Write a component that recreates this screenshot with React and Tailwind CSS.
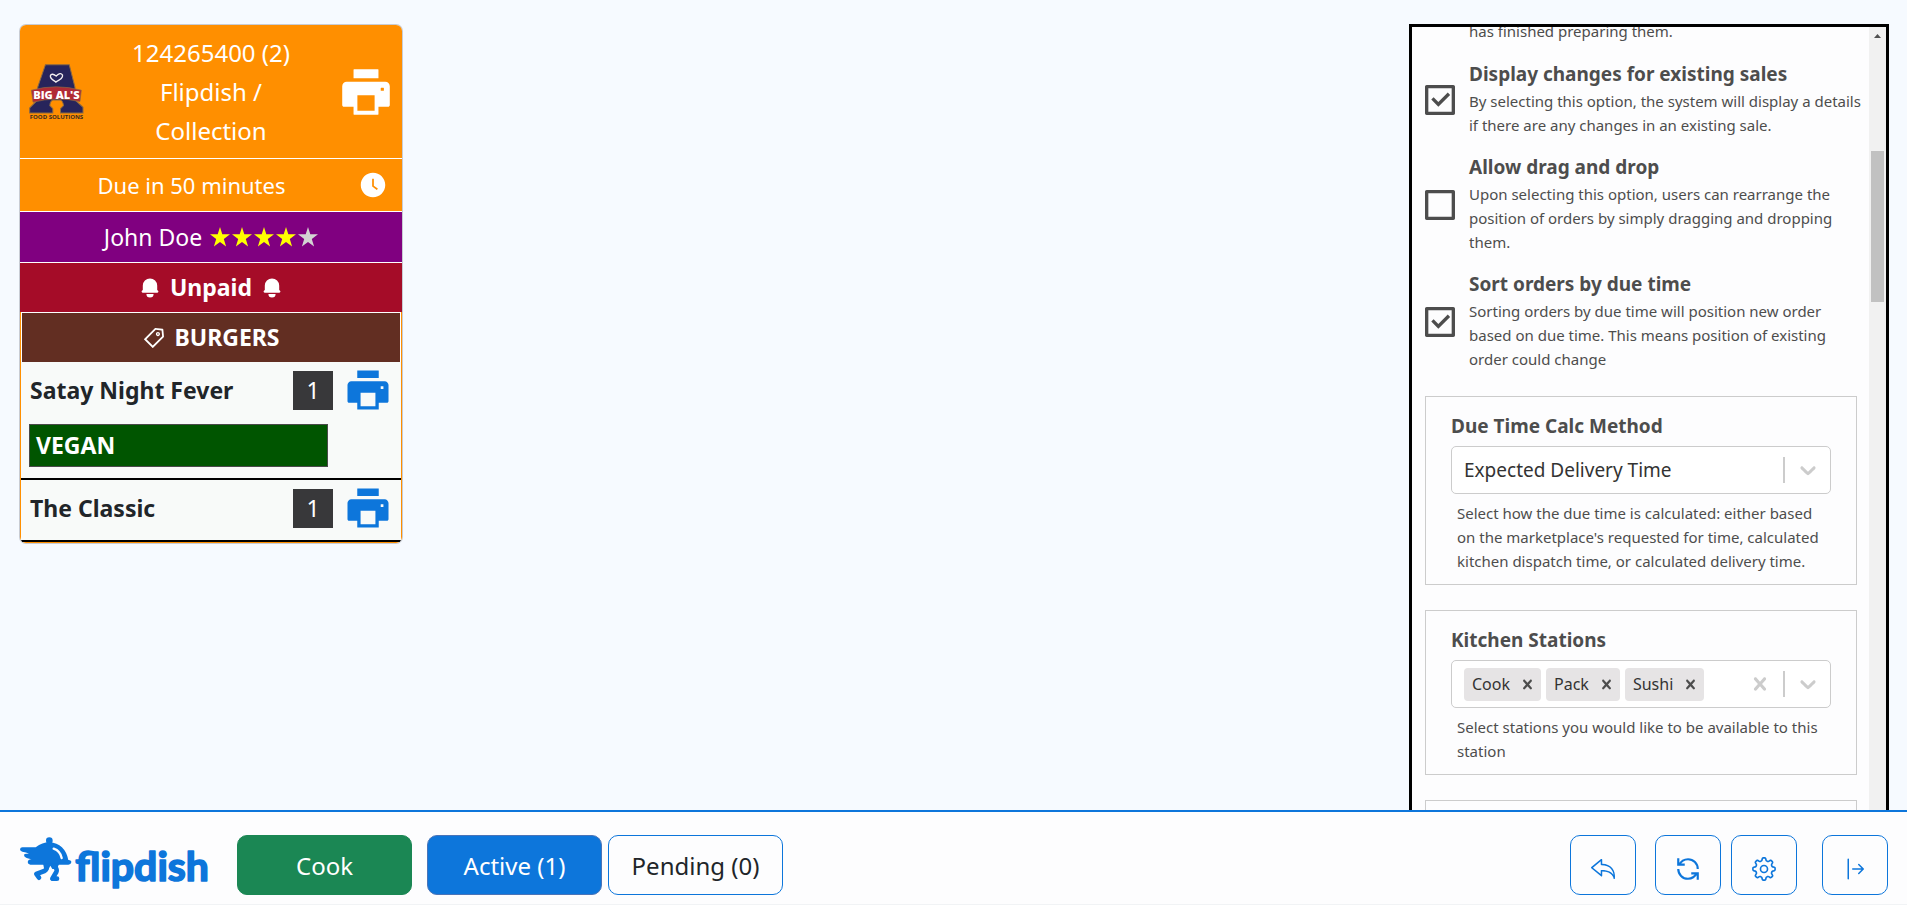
import React, { useState } from "react";
import { AiFillPrinter, AiFillClockCircle, AiOutlineTag } from "react-icons/ai";
import { BsArrowBarRight } from "react-icons/bs";
import { GoGear } from "react-icons/go";
import { GrPowerCycle } from "react-icons/gr";
import { HiBell } from "react-icons/hi";
import { RiCheckboxBlankLine, RiCheckboxLine } from "react-icons/ri";
import { SlActionUndo } from "react-icons/sl";

function FlipdishLogo() {
  return (
    <svg viewBox="15 30 570 180" className="h-[60px] w-[190px] shrink-0 overflow-visible text-[#0d76db]" role="img" aria-label="flipdish">
      <g fill="currentColor">
        <circle cx="103" cy="47" r="10" />
        <path d="M96 50 h14 v12 h-14z" />
        <path d="M22 67 H62 Q82 52 103 52 Q150 56 160 105 Q170 106 169 112 Q168 119 160 119 H46 Q38 117 38 111 Q39 104 47 103 H50 Q43 101 35 99 Q27 96 27 90 Q28 86 34 86 H42 Q34 82 22 80 Q15 78 15 73 Q16 67 22 67z" />
        <path d="M84 115 H133 L126 132 H112 L106 122 L100 134 H88z" />
      </g>
      <path d="M116 71 Q136 78 140 99" fill="none" stroke="#fdfdfe" strokeWidth="7" strokeLinecap="round" />
      <g fill="none" stroke="currentColor" strokeWidth="14" strokeLinecap="round" strokeLinejoin="round">
        <path d="M94 122 Q97 134 88 138 L64 147 L72 158" />
        <path d="M118 122 Q128 134 124 141 L112 161 H126" />
      </g>
      <text x="181" y="167" className="font-['Lato',sans-serif] text-[123px] font-bold" fill="currentColor" stroke="currentColor" strokeWidth="5" strokeLinejoin="round">
        flipdish
      </text>
    </svg>
  );
}

function BigAlsLogo() {
  return (
    <svg viewBox="24 36 170 170" className="size-[57px] shrink-0 overflow-visible" role="img" aria-label="Big Al's Food Solutions">
      <path d="M76 41 H147 L164 108 V146 L188 168 V185 H121 V172 L130 163 Q128 148 120 146 H98 Q90 150 89 163 L98 172 V185 H29 V170 L53 146 V108z" fill="#27245b" stroke="#8a6a45" strokeWidth="3" />
      <path d="M108 93 Q88 82 91 73 Q95 65 108 75 Q121 62 127 72 Q129 82 106 93" fill="none" stroke="#f3eef0" strokeWidth="4" strokeLinecap="round" />
      <path d="M34 117 Q108 97 183 117 L179 151 Q108 135 39 153z" fill="#b02a35" stroke="#8a6a45" strokeWidth="2" />
      <text x="109" y="142" textAnchor="middle" fill="#ffffff" className="font-['Open_Sans',sans-serif] text-[33px] font-extrabold">BIG AL'S</text>
      <text x="109" y="203" textAnchor="middle" fill="#3a2a20" className="font-['Open_Sans',sans-serif] text-[18px] font-bold">FOOD SOLUTIONS</text>
    </svg>
  );
}

function Star({ filled }) {
  return (
    <svg viewBox="0 0 20 20" className={filled ? "size-5 text-[#ffff00]" : "size-5 text-[#d3d3d3]"} aria-hidden="true">
      <path fill="currentColor" d="M10 0 L12.3 7.3 H20 L13.8 11.9 L16.1 19.5 L10 14.9 L3.9 19.5 L6.2 11.9 L0 7.3 H7.7z" />
    </svg>
  );
}

function Chevron() {
  return (
    <svg viewBox="0 0 20 20" className="size-[26px] text-[#cccccc]" aria-hidden="true">
      <path fill="currentColor" d="M4.516 7.548c0.436-0.446 1.043-0.481 1.576 0l3.908 3.747 3.908-3.747c0.533-0.481 1.141-0.446 1.574 0 0.436 0.445 0.408 1.197 0 1.615-0.406 0.418-4.695 4.502-4.695 4.502-0.217 0.223-0.502 0.335-0.787 0.335s-0.57-0.112-0.789-0.335c0 0-4.287-4.084-4.695-4.502s-0.436-1.17 0-1.615z" />
    </svg>
  );
}

function Cross({ className }) {
  return (
    <svg viewBox="0 0 20 20" className={className} aria-hidden="true">
      <path fill="currentColor" d="M14.348 14.849c-0.469 0.469-1.229 0.469-1.697 0l-2.651-3.030-2.651 3.029c-0.469 0.469-1.229 0.469-1.697 0-0.469-0.469-0.469-1.229 0-1.697l2.758-3.15-2.759-3.152c-0.469-0.469-0.469-1.228 0-1.697s1.228-0.469 1.697 0l2.652 3.031 2.651-3.031c0.469-0.469 1.228-0.469 1.697 0s0.469 1.229 0 1.697l-2.758 3.152 2.758 3.15c0.469 0.469 0.469 1.229 0 1.698z" />
    </svg>
  );
}

function OrderItem({ name, quantity, note }) {
  return (
    <li className="border-b-2 border-black bg-[#f8faf9]">
      <div className="flex h-[60px] items-center gap-2.5 pr-2 pb-1 pl-[9px]">
        <span className="flex-1 text-[23px] leading-8 font-bold text-[#212529]">{name}</span>
        <span className="flex h-[39px] w-10 items-center justify-center bg-[#38383a] text-[23px] text-white">{quantity}</span>
        <button type="button" aria-label={`Print ${name}`} className="text-[#0d76db]">
          <AiFillPrinter className="size-[50px]" />
        </button>
      </div>
      {note && (
        <p className="mt-0.5 mr-[73px] mb-[11px] ml-2 flex h-[43px] items-center border border-[#4a4a4a] bg-[#005500] px-1.5 text-[23px] font-bold text-white">
          {note}
        </p>
      )}
    </li>
  );
}

function OrderCard() {
  return (
    <article className="mt-px w-[382px] shrink-0 self-start overflow-hidden rounded-md text-[23px] text-white shadow-[0_0_0_1px_#c8ccd4]">
      <header className="flex h-[134px] items-center justify-between border-b border-white bg-[#ff8f00] pr-[7px] pl-2">
        <BigAlsLogo />
        <h2 className="w-[170px] text-center text-2xl leading-[39px]">124265400 (2) Flipdish / Collection</h2>
        <button type="button" aria-label="Print order">
          <AiFillPrinter className="size-[58px]" />
        </button>
      </header>
      <div className="flex h-[53px] items-center border-b border-white bg-[#ff8f00] pr-[15px]">
        <span className="flex-1 pl-1 text-center text-[22px]">Due in 50 minutes</span>
        <AiFillClockCircle className="size-7" />
      </div>
      <div className="flex h-[51px] items-center justify-center gap-2 border-b border-white bg-[#800080]">
        <span>John Doe</span>
        <span className="flex gap-0.5" role="img" aria-label="4 out of 5 stars">
          <Star filled />
          <Star filled />
          <Star filled />
          <Star filled />
          <Star />
        </span>
      </div>
      <div className="flex h-[49px] items-center justify-center gap-2 bg-[#a50c28] font-bold">
        <HiBell className="size-6" />
        <span>Unpaid</span>
        <HiBell className="size-6" />
      </div>
      <section className="border border-t-0 border-[#ff8f00] bg-white">
        <h3 className="mx-px flex h-[50px] items-center justify-center gap-2 border-t border-white bg-[#622e22] font-bold">
          <AiOutlineTag className="size-6" />
          BURGERS
        </h3>
        <ul>
          <OrderItem name="Satay Night Fever" quantity={1} note="VEGAN" />
          <OrderItem name="The Classic" quantity={1} />
        </ul>
      </section>
    </article>
  );
}

function ToggleOption({ title, description, defaultChecked = false }) {
  const [checked, setChecked] = useState(defaultChecked);
  const Box = checked ? RiCheckboxLine : RiCheckboxBlankLine;
  return (
    <label className="flex items-center gap-[9px] pr-1 pl-2">
      <span className="grid shrink-0 pt-1">
        <input
          type="checkbox"
          checked={checked}
          onChange={(e) => setChecked(e.target.checked)}
          className="col-start-1 row-start-1 size-10 appearance-none"
        />
        <Box className="pointer-events-none col-start-1 row-start-1 size-10" aria-hidden="true" />
      </span>
      <span className="flex flex-col">
        <span className="text-[19px] leading-[30px] font-bold">{title}</span>
        <span className="text-[15px] leading-6">{description}</span>
      </span>
    </label>
  );
}

function SettingBox({ title, htmlFor, description, children }) {
  return (
    <section className="mr-3 ml-[13px] flex flex-col border border-[#cccccc] px-[25px] pt-3.5 pb-[11px]">
      <label htmlFor={htmlFor} className="text-[19px] leading-[30px] font-bold">{title}</label>
      <div className="mt-[5px] mb-[7px]">{children}</div>
      <p className="px-1.5 text-[15px] leading-6">{description}</p>
    </section>
  );
}

function StationChip({ name, onRemove }) {
  return (
    <span className="flex h-[33px] items-center rounded-sm bg-[#e6e4e5] pl-2 text-base text-[#333333]">
      {name}
      <button type="button" aria-label={`Remove ${name}`} onClick={onRemove} className="flex h-full items-center pr-1 pl-2 text-[#4d4d4d]">
        <Cross className="size-[19px]" />
      </button>
    </span>
  );
}

function SettingsPanel() {
  const [stations, setStations] = useState(["Cook", "Pack", "Sushi"]);
  return (
    <aside className="flex w-[480px] shrink-0 overflow-hidden border-[3px] border-b-0 border-black bg-[#fdfdfe] text-[#4d4d4d]">
      <div className="flex min-w-0 flex-1 flex-col overflow-hidden">
        <p className="-mt-2 mb-4 shrink-0 pl-[57px] text-[15px] leading-6">has finished preparing them.</p>
        <div className="flex shrink-0 flex-col gap-[15px]">
          <ToggleOption
            defaultChecked
            title="Display changes for existing sales"
            description="By selecting this option, the system will display a details if there are any changes in an existing sale."
          />
          <ToggleOption
            title="Allow drag and drop"
            description="Upon selecting this option, users can rearrange the position of orders by simply dragging and dropping them."
          />
          <ToggleOption
            defaultChecked
            title="Sort orders by due time"
            description="Sorting orders by due time will position new order based on due time. This means position of existing order could change"
          />
        </div>
        <div className="mt-[25px] flex shrink-0 flex-col gap-[25px]">
          <SettingBox
            title="Due Time Calc Method"
            htmlFor="due-method"
            description="Select how the due time is calculated: either based on the marketplace's requested for time, calculated kitchen dispatch time, or calculated delivery time."
          >
            <div className="grid h-12 grid-cols-[1fr_auto] items-center rounded-[5px] border border-[#cccccc] bg-white">
              <select id="due-method" className="col-span-2 col-start-1 row-start-1 h-full w-full appearance-none bg-transparent pl-3 text-[19px] text-[#333333]">
                <option>Expected Delivery Time</option>
              </select>
              <span className="pointer-events-none col-start-2 row-start-1 flex items-center gap-2.5 pr-[9px]">
                <span className="h-[26px] w-0.5 bg-[#cccccc]" />
                <Chevron />
              </span>
            </div>
          </SettingBox>
          <SettingBox title="Kitchen Stations" htmlFor="stations" description="Select stations you would like to be available to this station">
            <div className="flex h-12 items-center gap-[5px] rounded-[5px] border border-[#cccccc] bg-white pr-[9px] pl-3">
              {stations.map((s) => (
                <StationChip key={s} name={s} onRemove={() => setStations(stations.filter((x) => x !== s))} />
              ))}
              <input id="stations" type="text" className="h-full min-w-0 flex-1 bg-transparent outline-none" />
              <span className="flex items-center gap-2.5">
                <button type="button" aria-label="Clear stations" onClick={() => setStations([])}>
                  <Cross className="size-[26px] text-[#cccccc]" />
                </button>
                <span className="h-[26px] w-0.5 bg-[#cccccc]" />
                <Chevron />
              </span>
            </div>
          </SettingBox>
          <section className="mr-3 ml-[13px] h-40 border border-[#cccccc]" />
        </div>
      </div>
      <div className="flex w-[17px] shrink-0 flex-col items-center bg-[#f1f1f1]" aria-hidden="true">
        <svg viewBox="0 0 17 17" className="size-[17px] shrink-0">
          <path d="M5 11 L8.5 7 L12 11z" fill="#505050" />
        </svg>
        <div className="mt-[107px] h-[151px] w-[13px] shrink-0 bg-[#c1c1c1]" />
      </div>
    </aside>
  );
}

function StageButton({ children, className }) {
  return (
    <button type="button" className={`h-[60px] w-[175px] shrink-0 rounded-[10px] border pt-0.5 text-2xl ${className}`}>
      {children}
    </button>
  );
}

function IconButton({ label, className = "", children }) {
  return (
    <button
      type="button"
      aria-label={label}
      className={`flex h-[60px] w-[66px] shrink-0 items-center justify-center rounded-[10px] border border-[#0d76db] pt-2 text-[#0d76db] ${className}`}
    >
      {children}
    </button>
  );
}

export default function App() {
  return (
    <div className="flex h-screen flex-col bg-[#f6faff] font-['Noto_Sans',sans-serif]">
      <main className="flex min-h-0 flex-1 justify-between overflow-hidden pt-6 pr-[18px] pl-5">
        <OrderCard />
        <SettingsPanel />
      </main>
      <footer className="flex shrink-0 items-center justify-between border-t-2 border-b border-t-[#0d76db] border-b-[#f1f3f5] bg-[#fdfdfe] pt-[23px] pr-[19px] pb-[9px] pl-5">
        <div className="flex items-center">
          <FlipdishLogo />
          <StageButton className="ml-[27px] border-[#1b8754] bg-[#1b8754] text-white">Cook</StageButton>
          <StageButton className="ml-[15px] border-[#4a74b8] bg-[#0d76db] text-white">Active (1)</StageButton>
          <StageButton className="ml-1.5 border-[#0d76db] bg-[#fdfdfe] text-[#212529]">Pending (0)</StageButton>
        </div>
        <div className="flex items-center">
          <IconButton label="Undo">
            <SlActionUndo className="size-6" />
          </IconButton>
          <IconButton label="Refresh" className="ml-[19px]">
            <GrPowerCycle className="size-[26px] -scale-x-100 [&_path]:stroke-[#0d76db]" />
          </IconButton>
          <IconButton label="Settings" className="ml-2.5">
            <GoGear className="size-[26px]" />
          </IconButton>
          <IconButton label="Exit" className="ml-[25px]">
            <BsArrowBarRight className="size-6" />
          </IconButton>
        </div>
      </footer>
    </div>
  );
}
